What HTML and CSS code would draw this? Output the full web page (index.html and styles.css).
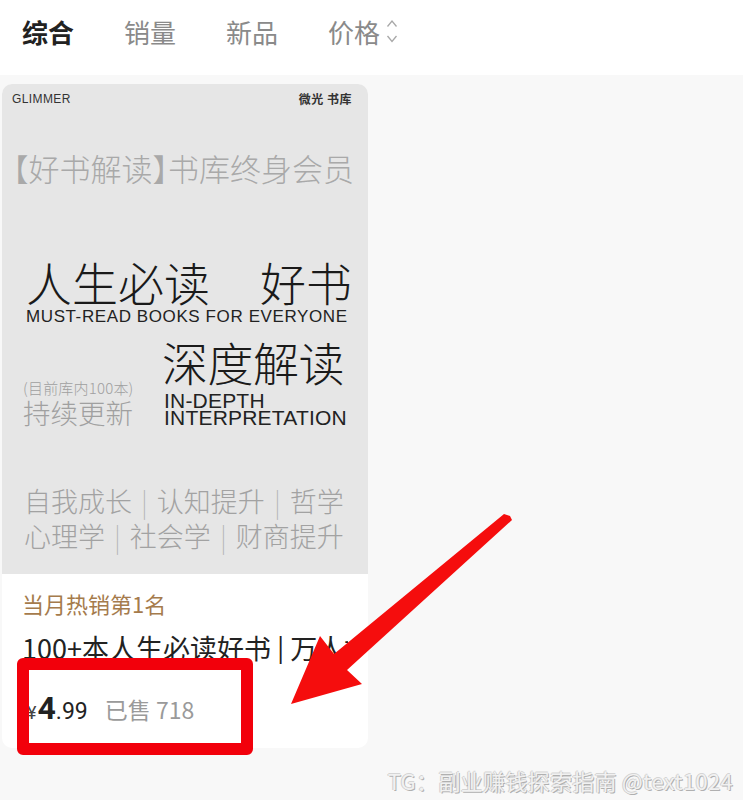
FILE: index.html
```html
<!DOCTYPE html>
<html lang="zh">
<head>
<meta charset="utf-8">
<link rel="stylesheet" href="styles.css">
</head>
<body>
<div class="page">
  <nav class="tabs">
    <span class="tab active">综合</span>
    <span class="tab">销量</span>
    <span class="tab">新品</span>
    <span class="tab sort">价格
      <svg class="sort-icon" width="12" height="28" viewBox="0 0 12 28">
        <path d="M1.5 8.5 L6 3 L10.5 8.5" fill="none" stroke="#a8a8a8" stroke-width="1.3"/>
        <path d="M1.5 18 L6 23.5 L10.5 18" fill="none" stroke="#a8a8a8" stroke-width="1.3"/>
      </svg>
    </span>
  </nav>
  <main class="list">
    <article class="card">
      <div class="cover">
        <div class="cover-top"><span class="brand">GLIMMER</span><span class="brand-cn">微光 书库</span></div>
        <div class="cover-sub">【好书解读】书库终身会员</div>
        <div class="cover-main">
          <div class="row1"><span>人生必读</span><span>好书</span></div>
          <div class="en1">MUST-READ BOOKS FOR EVERYONE</div>
          <div class="row2">
            <div class="left-note">
              <div class="note-small">(目前库内100本)</div>
              <div class="note-big">持续更新</div>
            </div>
            <div class="right-block">
              <div class="deep">深度解读</div>
              <div class="en2">IN-DEPTH<br>INTERPRETATION</div>
            </div>
          </div>
        </div>
        <div class="tags">
          <div>自我成长<span class="bar">|</span>认知提升<span class="bar">|</span>哲学</div>
          <div>心理学<span class="bar">|</span>社会学<span class="bar">|</span>财商提升</div>
        </div>
      </div>
      <div class="info">
        <div class="rank">当月热销第1名</div>
        <div class="title">100+本人生必读好书 | 万人推荐</div>
        <div class="price-row">
          <span class="price"><span class="yen">¥</span><span class="int">4</span><span class="dec">.99</span></span>
          <span class="sold">已售 718</span>
        </div>
      </div>
    </article>
  </main>
  <div class="highlight"></div>
  <svg class="arrow" width="743" height="800" viewBox="0 0 743 800">
    <polygon points="291,704 320,636 334,654 504,514 510,516 512,520 347,670 362,684" fill="#f50d0d"/>
  </svg>
  <div class="watermark">TG：副业赚钱探索指南 @text1024</div>
</div>
</body>
</html>
```
FILE: styles.css
```css
* { box-sizing: border-box; margin: 0; padding: 0; }
html, body { width: 743px; height: 800px; overflow: hidden; }
body {
  font-family: "Noto Sans CJK SC", "Noto Sans", sans-serif;
  background: #f8f8f8;
}
.page { position: relative; width: 743px; height: 800px; }
.tabs {
  height: 75px;
  background: #fff;
  display: flex;
  align-items: center;
  padding-left: 22px;
  gap: 50px;
  padding-bottom: 12px;
}
.tab {
  font-size: 26px;
  color: #8a8a8a;
  line-height: 30px;
  display: flex;
  align-items: center;
}
.tab.active { color: #222; font-weight: 700; }
.sort-icon { margin-left: 6px; }
.list { padding: 9px 0 0 2px; }
.card {
  width: 366px;
  height: 664px;
  background: #fff;
  border-radius: 10px;
  overflow: hidden;
}
.cover {
  height: 490px;
  background: #e6e6e6;
  padding: 8px 14px 0 10px;
  font-weight: 300;
}
.cover-top {
  display: flex;
  justify-content: space-between;
  font-size: 12px;
  line-height: 14px;
  color: #333;
}
.brand { font-family: "Liberation Sans", sans-serif; font-weight: 400; letter-spacing: 0.4px; }
.brand-cn { font-weight: 700; letter-spacing: 0.5px; margin-right: 2px; }
.cover-sub {
  margin-top: 44px;
  margin-left: 1px;
  font-size: 31px;
  line-height: 36px;
  color: #a9a9a9;
  white-space: nowrap;
  font-feature-settings: "halt";
}
.cover-main { margin-top: 70px; padding-left: 14px; color: #1a1a1a; }
.row1 {
  display: flex;
  justify-content: space-between;
  font-size: 46px;
  line-height: 50px;
  width: 326px;
}
.en1 {
  font-family: "Liberation Sans", sans-serif;
  font-size: 17px;
  line-height: 18px;
  letter-spacing: 0.6px;
  white-space: nowrap;
  margin-top: 2px;
  color: #222;
}
.row2 { display: flex; align-items: flex-end; margin-top: 9px; }
.left-note { color: #a0a0a0; width: 139px; margin-left: -3px; }
.note-small { font-size: 15px; line-height: 16px; letter-spacing: 0.2px; padding-bottom: 0; }
.note-big { font-size: 27.5px; line-height: 32px; }
.deep { font-size: 46px; line-height: 52px; letter-spacing: -0.5px; margin-bottom: 5px; }
.en2 {
  font-family: "Liberation Sans", sans-serif;
  font-size: 21px;
  line-height: 17px;
  letter-spacing: 0.2px;
  color: #222;
  padding-left: 2px;
  padding-bottom: 2px;
}
.tags {
  margin-top: 55px;
  padding-left: 12px;
  font-size: 27px;
  line-height: 35px;
  color: #a2a2a2;
  white-space: nowrap;
}
.bar { display: inline-block; margin: 0 9px; font-weight: 300; color: #b0b0b0; transform: scaleX(0.7); }
.info { padding: 15px 20px 0 20px; }
.rank { font-size: 22px; line-height: 28px; color: #a57b4c; }
.title {
  margin-top: 15px;
  font-size: 27px;
  line-height: 32px;
  color: #222;
  white-space: nowrap;
  overflow: hidden;
}
.price-row { display: flex; align-items: baseline; margin-top: 25px; margin-left: 5px; gap: 17px; }
.price { color: #222; font-family: "Roboto", sans-serif; }
.yen { font-size: 18px; color: #444; margin-right: 1px; }
.int { font-size: 32px; font-weight: 700; }
.dec { font-size: 23px; }
.sold { font-size: 23px; color: #9a9a9a; }
.highlight {
  position: absolute;
  left: 17px; top: 658px;
  width: 236px; height: 97px;
  border: 12px solid #f2000b;
  border-radius: 6px;
}
.arrow { position: absolute; left: 0; top: 0; pointer-events: none; }
.watermark {
  position: absolute;
  right: 10px; top: 765px;
  font-size: 22px;
  line-height: 30px;
  color: #f1f1f1;
  letter-spacing: 0.3px;
  text-shadow: 1px 1px 0 #b0b0b0, -1px 0 0 #cfcfcf, 0 -1px 0 #d5d5d5;
  white-space: nowrap;
}
```
